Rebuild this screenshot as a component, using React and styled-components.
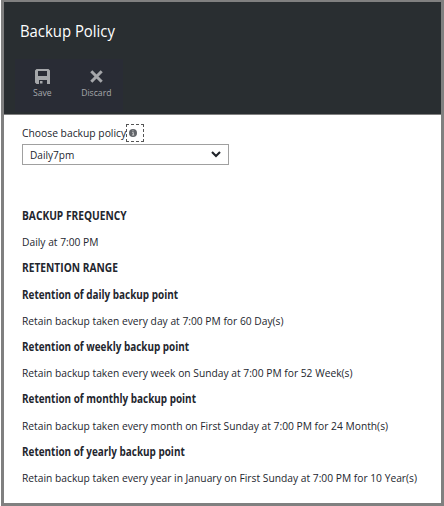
import React from "react";
import styled, { createGlobalStyle } from "styled-components";

const GlobalStyle = createGlobalStyle`
  * { box-sizing: border-box; }
  body { margin: 0; background: #fff; font-family: "Open Sans", "Noto Sans", sans-serif; }
`;

const Blade = styled.main`
  width: 443px;
  height: 506px;
  margin-left: 1px;
  border: solid #808080;
  border-width: 2px 3px 3px 3px;
  background: #fff;
  color: #23262e;
`;

const Header = styled.header`
  height: 113px;
  padding: 17px 0 0 15px;
  background: #292e31;
  border-bottom: 1px solid #808080;
`;

const Title = styled.h1`
  margin: 0 0 0 1px;
  width: max-content;
  height: 24px;
  line-height: 24px;
  font-size: 17px;
  font-weight: 400;
  color: #fff;
  transform: scaleX(0.875);
  transform-origin: left;
`;

const Toolbar = styled.div`
  display: flex;
  width: 108px;
  height: 53px;
  margin-top: 16px;
  margin-left: -4px;
  background: #292c35;
`;

const ToolButton = styled.button`
  display: flex;
  flex-direction: column;
  align-items: center;
  width: 54px;
  padding: 10px 0 0;
  border: 0;
  background: none;
  font-family: inherit;
  font-size: 9px;
  line-height: 12px;
  color: #a5a7aa;

  svg { display: block; margin-bottom: 3px; }
`;

const ToolLabel = styled.span`
  transform: translateX(0.5px) scaleX(0.96);
`;

const Content = styled.section`
  padding: 9px 18px 0;
`;

const FieldRow = styled.div`
  display: flex;
  align-items: center;
  height: 18px;
  margin-bottom: 2px;
`;

const FieldLabel = styled.label`
  width: 104px;
  font-size: 11.5px;
  line-height: 16px;
  white-space: nowrap;
  transform: scaleX(0.897);
  transform-origin: left;
`;

const InfoButton = styled.span`
  display: flex;
  align-items: center;
  width: 18px;
  height: 18px;
  padding-left: 2px;
  border: 1px dashed #555;
`;

const Select = styled.button`
  display: flex;
  align-items: center;
  justify-content: space-between;
  width: 207px;
  height: 21px;
  padding: 0 7px;
  border: 1px solid #a0a0a0;
  background: #fff;
  color: inherit;
  font-family: inherit;
  font-size: 11.5px;
`;

const SelectValue = styled.span`
  transform: scaleX(0.877);
  transform-origin: left;
`;

const Details = styled.div`
  margin-top: 38px;
`;

const Line = styled.p`
  margin: 0;
  width: max-content;
  height: 26.2px;
  line-height: 26px;
  font-size: 11.5px;
  white-space: nowrap;
  transform: scaleX(0.892);
  transform-origin: left;
`;

const Heading = styled(Line)`
  font-weight: 700;
  transform: scaleX(0.887);
`;

const Subheading = styled(Line)`
  font-weight: 700;
  transform: scaleX(0.863);
`;

const SaveIcon = () => (
  <svg width="15" height="15" viewBox="0 0 15 15">
    <path
      fillRule="evenodd"
      fill="#a5a7aa"
      d="M1.5 0h12L15 1.5V15h-3v-4H4v4H1.5L0 13.5v-12zM3 2v5h9V2z"
    />
    <path d="M5 12h2.5v2.5H5z" fill="#a5a7aa" />
  </svg>
);

const DiscardIcon = () => (
  <svg width="15" height="15" viewBox="0 0 15 15">
    <path d="M2.3 2.3l10.4 10.4M12.7 2.3L2.3 12.7" stroke="#a5a7aa" strokeWidth="3" />
  </svg>
);

const InfoIcon = () => (
  <svg width="8" height="8" viewBox="0 0 8 8">
    <circle cx="4" cy="4" r="4" fill="#62656a" />
    <path d="M3.3 3.5h1v2.5M3 6h2.2M3.4 1.9h1.1" stroke="#d8d8d8" strokeWidth=".9" fill="none" />
  </svg>
);

const Chevron = () => (
  <svg width="10" height="7" viewBox="0 0 10 7">
    <path d="M1 1.1l4 4 4-4" fill="none" stroke="#1f2329" strokeWidth="2.1" />
  </svg>
);

const retention = [
  ["Retention of daily backup point", "Retain backup taken every day at 7:00 PM for 60 Day(s)"],
  ["Retention of weekly backup point", "Retain backup taken every week on Sunday at 7:00 PM for 52 Week(s)"],
  ["Retention of monthly backup point", "Retain backup taken every month on First Sunday at 7:00 PM for 24 Month(s)"],
  ["Retention of yearly backup point", "Retain backup taken every year in January on First Sunday at 7:00 PM for 10 Year(s)"],
];

export default function App() {
  return (
    <>
      <GlobalStyle />
      <Blade>
        <Header>
          <Title>Backup Policy</Title>
          <Toolbar>
            <ToolButton><SaveIcon /><ToolLabel>Save</ToolLabel></ToolButton>
            <ToolButton><DiscardIcon /><ToolLabel>Discard</ToolLabel></ToolButton>
          </Toolbar>
        </Header>
        <Content>
          <FieldRow>
            <FieldLabel>Choose backup policy</FieldLabel>
            <InfoButton><InfoIcon /></InfoButton>
          </FieldRow>
          <Select><SelectValue>Daily7pm</SelectValue><Chevron /></Select>
          <Details>
            <Heading>BACKUP FREQUENCY</Heading>
            <Line>Daily at 7:00 PM</Line>
            <Heading>RETENTION RANGE</Heading>
            {retention.map(([title, text]) => (
              <React.Fragment key={title}>
                <Subheading>{title}</Subheading>
                <Line>{text}</Line>
              </React.Fragment>
            ))}
          </Details>
        </Content>
      </Blade>
    </>
  );
}
